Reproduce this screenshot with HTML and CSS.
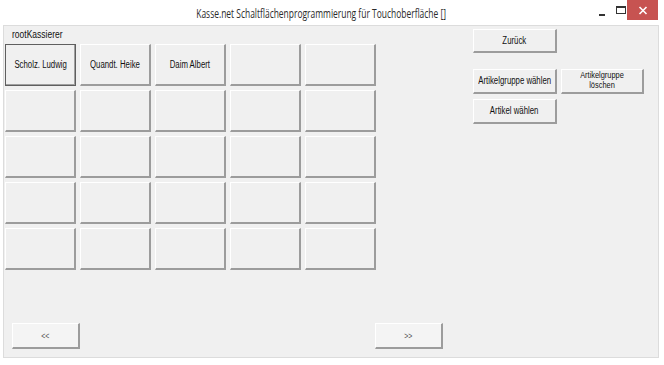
FILE: index.html
```html
<!DOCTYPE html>
<html lang="de">

<head>
    <meta charset="UTF-8">
    <meta name="viewport" content="width=device-width, initial-scale=1.0">
    <title>Kasse.net Schaltflächenprogrammierung</title>
    <link rel="stylesheet" href="styles.css">
</head>

<body>
    <div class="window">
        <div class="titlebar">
            <div class="title"><span>Kasse.net Schaltflächenprogrammierung für Touchoberfläche []</span></div>
            <div class="controls">
                <div class="ctl ctl-min">
                    <svg width="8" height="8" viewBox="0 0 8 8"><rect x="1" y="6" width="6" height="2" fill="#333"/></svg>
                </div>
                <div class="ctl ctl-max">
                    <svg width="10" height="8" viewBox="0 0 10 8"><rect x="0.5" y="0.5" width="9" height="7" fill="none" stroke="#333"/><rect x="0" y="0" width="10" height="2" fill="#333"/></svg>
                </div>
                <div class="ctl ctl-close">
                    <svg width="10" height="9" viewBox="0 0 10 9"><path d="M1.5 1 L8.5 8 M8.5 1 L1.5 8" stroke="#ffffff" stroke-width="1.6"/></svg>
                </div>
            </div>
        </div>

        <div class="client">
            <div class="main">
                <div class="left">
                    <div class="path-label"><span>rootKassierer</span></div>
                    <div class="button-grid">
                        <button class="btn selected"><span>Scholz. Ludwig</span></button>
                        <button class="btn"><span>Quandt. Heike</span></button>
                        <button class="btn"><span>Daim Albert</span></button>
                        <button class="btn"></button>
                        <button class="btn"></button>
                        <button class="btn"></button>
                        <button class="btn"></button>
                        <button class="btn"></button>
                        <button class="btn"></button>
                        <button class="btn"></button>
                        <button class="btn"></button>
                        <button class="btn"></button>
                        <button class="btn"></button>
                        <button class="btn"></button>
                        <button class="btn"></button>
                        <button class="btn"></button>
                        <button class="btn"></button>
                        <button class="btn"></button>
                        <button class="btn"></button>
                        <button class="btn"></button>
                        <button class="btn"></button>
                        <button class="btn"></button>
                        <button class="btn"></button>
                        <button class="btn"></button>
                        <button class="btn"></button>
                    </div>
                </div>

                <div class="right">
                    <button class="btn side-btn"><span>Zurück</span></button>
                    <div class="side-row first">
                        <button class="btn side-btn"><span>Artikelgruppe wählen</span></button>
                        <button class="btn side-btn narrow"><span>Artikelgruppe<br>löschen</span></button>
                    </div>
                    <div class="side-row">
                        <button class="btn side-btn"><span>Artikel wählen</span></button>
                    </div>
                </div>
            </div>

            <div class="nav">
                <button class="btn nav-btn"><span>&lt;&lt;</span></button>
                <button class="btn nav-btn next"><span>&gt;&gt;</span></button>
            </div>
        </div>
    </div>
</body>

</html>
```

FILE: styles.css
```css
*,
*::before,
*::after {
    box-sizing: border-box;
    margin: 0;
    padding: 0;
}

body {
    background-color: #ffffff;
    font-family: "Liberation Sans", Arial, sans-serif;
}

.window {
    width: 664px;
    height: 365px;
    display: flex;
    flex-direction: column;
    background-color: #ffffff;
}

/* title bar */
.titlebar {
    height: 25px;
    display: flex;
    align-items: flex-start;
}

.title {
    flex: 1;
    text-align: center;
    font-family: "Open Sans", "Noto Sans", sans-serif;
    font-size: 13px;
    line-height: 26px;
    color: #2b2b2b;
    padding-left: 44px;
    white-space: nowrap;
}

.title span {
    display: inline-block;
    transform: scaleX(0.65);
}

.controls {
    flex: none;
    display: flex;
    margin-right: 6px;
}

.ctl {
    flex: none;
    height: 20px;
    display: flex;
    align-items: center;
}

.ctl-min {
    width: 18px;
    padding-top: 3px;
}

.ctl-max {
    width: 11px;
}

.ctl-close {
    width: 31px;
    justify-content: center;
    background-color: #c75351;
}

/* client area */
.client {
    flex: 1;
    margin: 0 5px 7px 3px;
    background-color: #f0f0f0;
    border: 1px solid #dcdcdc;
    display: flex;
    flex-direction: column;
}

.main {
    display: flex;
}

.left {
    padding-left: 1px;
}

.path-label {
    font-size: 10px;
    line-height: 12px;
    margin: 3px 0 3px 7px;
    color: #111;
}

.path-label span {
    display: inline-block;
    transform: scaleX(0.85);
    transform-origin: left center;
}

.button-grid {
    display: grid;
    grid-template-columns: repeat(5, 71px);
    grid-auto-rows: 42px;
    gap: 4px;
}

.btn {
    font-family: "Liberation Sans", Arial, sans-serif;
    font-size: 10px;
    color: #111;
    background-color: #f0f0f0;
    border-style: solid;
    border-width: 1px 2px 2px 1px;
    border-color: #ffffff #9c9c9c #9c9c9c #ffffff;
    line-height: 10px;
    white-space: nowrap;
    display: flex;
    align-items: center;
    justify-content: center;
}

.btn span {
    display: inline-block;
    transform: scaleX(0.78);
    text-align: center;
}

.btn.selected {
    border-width: 1px;
    border-color: #5f5f5f;
    box-shadow: inset -1px -1px 0 #a0a0a0;
}

.right {
    margin-left: 97px;
    padding-top: 3px;
    display: flex;
    flex-direction: column;
}

.side-btn {
    width: 84px;
    height: 24px;
}

.side-row {
    display: flex;
    gap: 4px;
    margin-top: 5px;
}

.side-row.first {
    margin-top: 16px;
}

.side-row .side-btn {
    height: 25px;
}

.side-btn.narrow {
    width: 83px;
    font-size: 9.5px;
    line-height: 10px;
    padding-bottom: 2px;
}

.nav {
    margin-top: auto;
    margin-bottom: 8px;
    display: flex;
}

.nav-btn {
    width: 68px;
    height: 26px;
    color: #555;
    font-size: 9px;
    margin-left: 8px;
    background-color: #f4f4f4;
}

.nav-btn.next {
    margin-left: 295px;
}
```
